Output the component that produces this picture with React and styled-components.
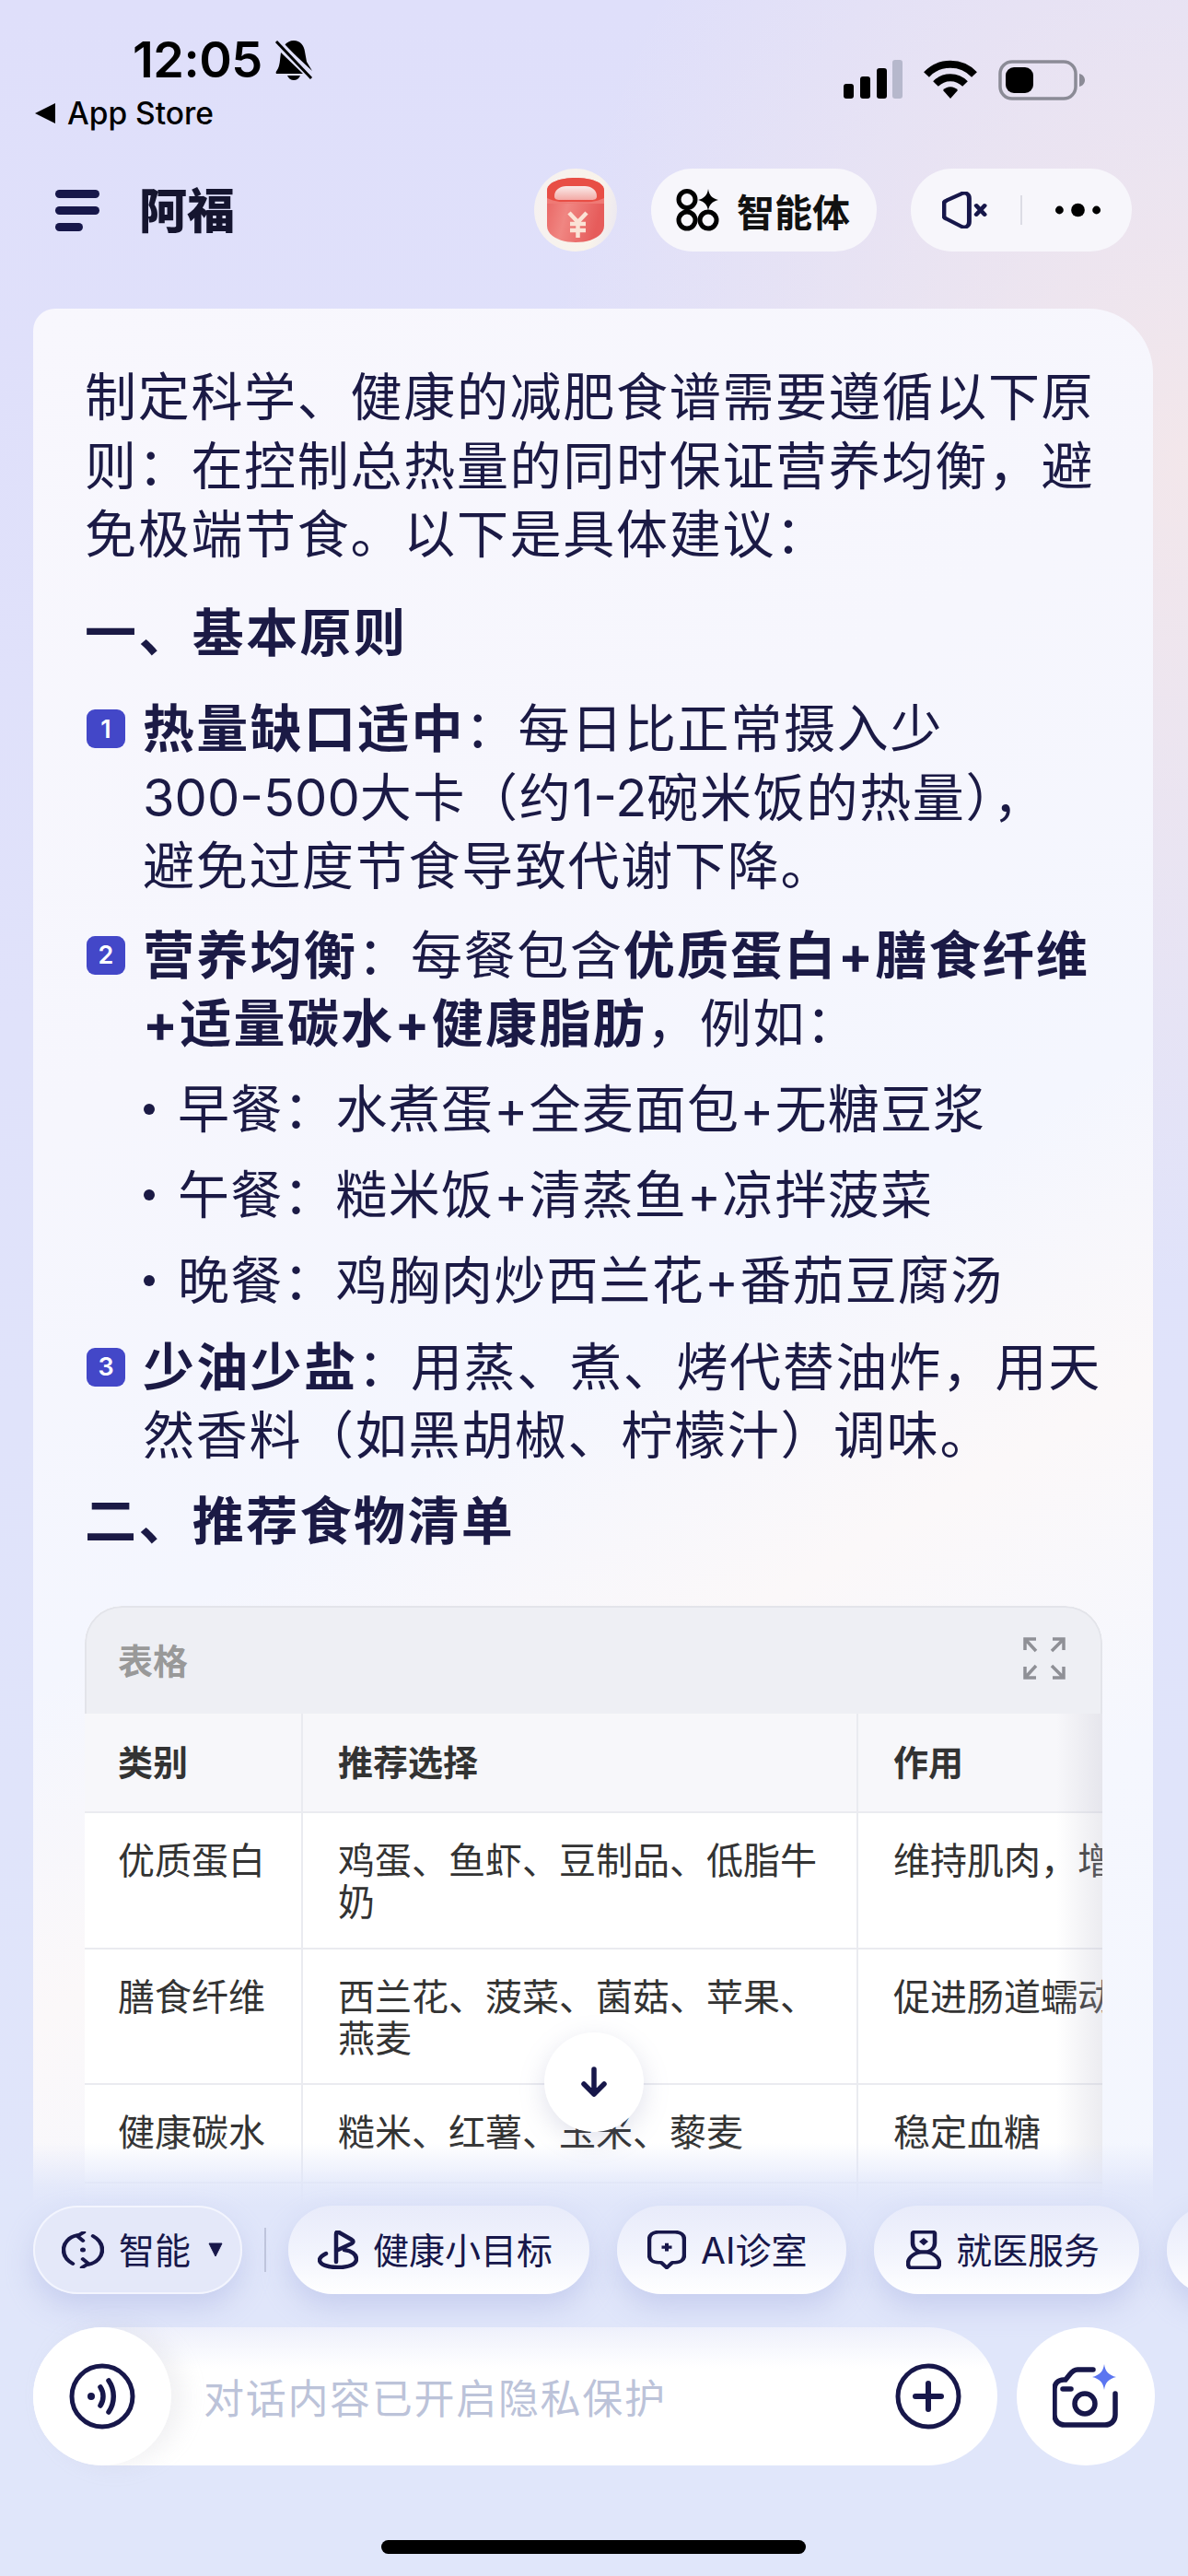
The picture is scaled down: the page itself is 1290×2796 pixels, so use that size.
import React from 'react';
import styled, { createGlobalStyle } from 'styled-components';

const Global = createGlobalStyle`
  html, body { margin: 0; padding: 0; }
  body { font-family: Inter, "Noto Sans CJK SC", sans-serif; color: #1b1a45; }
`;
const Page = styled.div`
  position: relative; width: 1290px; height: 2796px; overflow: hidden;
  background:
    radial-gradient(700px 900px at 1290px 500px, rgba(246,232,232,.85), rgba(246,232,232,0) 100%),
    linear-gradient(180deg, #dfdffa 0%, #e0e2fa 40%, #e0e6fa 100%);
`;
const StatusBar = styled.div`
  height: 183px; box-sizing: border-box; display: flex; justify-content: space-between; padding: 40px 112px 0 38px; color: #000;
`;
const StatusLeft = styled.div`display: flex; flex-direction: column;`;
const TimeRow = styled.div`display: flex; align-items: center; gap: 12px; margin-left: 106px; height: 50px;`;
const Time = styled.span`font: 600 54px/50px Inter, sans-serif; letter-spacing: -.5px;`;
const BackRow = styled.div`display: flex; align-items: center; gap: 13px; margin-top: 14px; font: 500 33.5px/38px Inter, sans-serif;`;
const StatusRight = styled.div`display: flex; align-items: flex-start; gap: 23px; padding-top: 25px;`;

const Header = styled.header`display: flex; align-items: center; height: 90px; padding: 0 61px 0 60px;`;
const Menu = styled.div`display: flex; flex-direction: column; gap: 9px; width: 48px; margin-right: 43px;`;
const MenuBar = styled.i`display: block; height: 9px; border-radius: 5px; background: #17174a; width: ${p => p.$short ? '30px' : '48px'};`;
const Title = styled.h1`margin: 0 0 4px; flex: 1; font: 900 52px/60px "Noto Sans CJK SC", sans-serif; color: #15152f; letter-spacing: 0;`;
const LogoBadge = styled.div`
  width: 90px; height: 90px; border-radius: 50%; display: flex; align-items: center; justify-content: center; margin-right: 37px;
  background: linear-gradient(100deg, #f5f1f1, #f9f3ea 70%, #e9e6f2);
`;
const TopPill = styled.div`
  height: 90px; border-radius: 45px; background: #f7f6fb; display: flex; align-items: center; box-sizing: border-box; white-space: nowrap;
  width: ${p => p.$w}px; padding: 0 ${p => p.$px}px; gap: 19px; margin-right: ${p => p.$mr || 0}px; color: #111;
  font: 700 41px/1 "Noto Sans CJK SC", sans-serif;
`;
const VLine = styled.i`display: block; width: 2px; height: 32px; background: #dcdce4; margin: 0 17px;`;

const Card = styled.main`
  margin: 62px 38px 0 36px; padding: 59px 55px 0 56px; height: 2300px; box-sizing: border-box;
  border-radius: 24px 70px 0 0;
  background: linear-gradient(150deg, #f8f7fd 0%, #f6f6fd 30%, #f4f6fe 50%, #fbf8f9 62%, #f5f7fe 75%, #f3f6fe 100%);
  font: 400 56px/74.5px Inter, "Noto Sans CJK SC", sans-serif; letter-spacing: 1.7px; color: #1b1a45;
`;
const Para = styled.p`margin: 0;`;
const Heading = styled.h2`margin: ${p => p.$mt}px 0 0; font: 700 56px/74.5px Inter, "Noto Sans CJK SC", sans-serif; letter-spacing: 2.4px;`;
const Item = styled.div`
  position: relative; padding-left: 63px; margin-top: ${p => p.$mt}px; letter-spacing: 1.7px;
  b { letter-spacing: 2.3px; }
`;
const Num = styled.span`letter-spacing: 0;`;
const Badge = styled.span`
  position: absolute; left: 2px; top: 16px; width: 42px; height: 42px; border-radius: 9px; background: #4347c8; color: #fff;
  display: flex; align-items: center; justify-content: center; font: 600 27px/1 Inter, sans-serif; letter-spacing: 0;
`;
const Bullets = styled.ul`margin: 9px 0 0; padding: 0 0 0 63px; list-style: none; letter-spacing: 1.2px;`;
const Bullet = styled.li`display: flex; align-items: center; gap: 25px; height: 93px;`;
const Dot = styled.i`display: block; width: 12px; height: 12px; border-radius: 50%; background: #1b1a45; margin-left: 1px;`;

const TableBox = styled.section`
  margin-top: 55px; width: 1105px; border-radius: 40px 40px 0 0; overflow: hidden; position: relative;
  background: #fff; font: 400 40px/45px "Noto Sans CJK SC", sans-serif; letter-spacing: 0; color: #333;
`;
const TableBar = styled.div`
  height: 117px; box-sizing: border-box; background: #eeeff4; border: 2px solid #e3e4ea; border-bottom: 0; border-radius: 40px 40px 0 0;
  display: flex; align-items: center; justify-content: space-between; padding: 0 38px 5px 34px; color: #999; font-weight: 700; font-size: 38px;
`;
const Row = styled.div`
  display: grid; grid-template-columns: 237px 603px 400px; height: ${p => p.$h}px; box-sizing: border-box;
  border-bottom: 2px solid #eaebf0; background: ${p => p.$head ? '#f7f7fa' : '#fff'};
  font-weight: ${p => p.$head ? 700 : 400}; font-size: ${p => p.$head ? 38 : 40}px;
`;
const Cell = styled.div`
  box-sizing: border-box; padding: ${p => p.$head ? '0 34px 6px 38px' : '27px 34px 0 38px'}; border-right: 2px solid #eaebf0; overflow: hidden;
  ${p => p.$head && 'display:flex;align-items:center;'}
  ${p => p.$nowrap && 'white-space:nowrap;'}
  &:first-child { padding-left: 36px; }
`;
const EdgeShade = styled.div`position: absolute; right: 0; top: 117px; bottom: 0; width: 50px; background: linear-gradient(90deg, rgba(190,190,205,0), rgba(190,190,205,.3));`;

const DownButton = styled.div`
  position: absolute; left: 591px; top: 2206px; width: 108px; height: 108px; border-radius: 50%; background: #fff; z-index: 3;
  display: flex; align-items: center; justify-content: center; box-shadow: 0 8px 28px rgba(120,125,170,.22);
`;
const Dock = styled.div`
  position: absolute; left: 0; right: 0; bottom: 0; height: 510px; z-index: 2; box-sizing: border-box; padding-top: 108px;
  background: linear-gradient(180deg, rgba(224,230,250,0) 40px, rgba(224,230,250,.85) 88px, #e0e6fa 108px);
`;
const ChipRow = styled.div`display: flex; align-items: center; height: 96px; padding-left: 36px; gap: 30px;`;
const Chip = styled.div`
  flex: none; height: 96px; border-radius: 48px; box-sizing: border-box; display: flex; align-items: center; gap: 16px;
  width: ${p => p.$w}px; padding-left: ${p => p.$pl}px; font: 400 39px/1 Inter, "Noto Sans CJK SC", sans-serif; color: #17174a;
  background: ${p => p.$flat ? '#e4e8f9' : 'linear-gradient(180deg, #e8ebfa 0%, #f2f4fd 55%, #fff 100%)'};
  box-shadow: 0 14px 30px rgba(165,175,225,.42)${p => p.$flat ? ', inset 0 0 0 2px #f3f5fe' : ''};
`;
const ChipDivider = styled.i`flex: none; display: block; width: 2px; height: 48px; background: #bfc5dc; margin: 0 -6px;`;
const InputRow = styled.div`display: flex; gap: 21px; padding-left: 36px; margin-top: 36px;`;
const InputBar = styled.div`
  position: relative; width: 1047px; height: 150px; border-radius: 75px; display: flex; align-items: center; box-sizing: border-box; padding-right: 39px;
  background: linear-gradient(180deg, #eef0fb 0, #fff 30%);
`;
const Round = styled.div`
  flex: none; width: 150px; height: 150px; border-radius: 50%; background: #fff; display: flex; align-items: center; justify-content: center;
  ${p => p.$shadow && 'box-shadow: 14px 0 24px rgba(180,180,190,.18);'}
`;
const Placeholder = styled.span`flex: 1; margin-left: 35px; color: #bcc3d9; font: 400 44px/1 "Noto Sans CJK SC", sans-serif; letter-spacing: 1.7px;`;
const HomeBar = styled.div`position: absolute; z-index: 3; left: 414px; bottom: 24px; width: 461px; height: 15px; border-radius: 8px; background: #000;`;

const Navy = '#17174a';
const Signal = () => (
  <svg width="64" height="42" viewBox="0 0 64 42">
    <rect x="0" y="26" width="11" height="16" rx="3" /><rect x="18" y="18" width="11" height="24" rx="3" />
    <rect x="36" y="9" width="11" height="33" rx="3" /><rect x="53" y="0" width="11" height="42" rx="3" fill="#b6b8cc" />
  </svg>
);
const Wifi = () => (
  <svg width="58" height="42" viewBox="0 0 58 42" fill="none" stroke="#000" strokeWidth="8">
    <path d="M3 16C17 1 41 1 55 16" /><path d="M13 26c9-9 23-9 32 0" />
    <path d="M21 33c4-5 12-5 16 0l-8 9z" fill="#000" stroke="none" />
  </svg>
);
const Battery = () => (
  <svg width="94" height="44" viewBox="0 0 94 44">
    <rect x="2" y="2" width="82" height="40" rx="13" fill="none" stroke="#8b8b96" strokeWidth="3.5" />
    <rect x="8" y="8" width="30" height="28" rx="9" fill="#000" />
    <path d="M88 15c4 1 6 4 6 7s-2 6-6 7z" fill="#8b8b96" />
  </svg>
);
const BellOff = () => (
  <svg width="44" height="44" viewBox="0 0 44 44">
    <path d="M22 1c7 0 11 5 12 12l2 11 6 10-30-28c2-3 6-5 10-5zM8 14l24 23H3c-1-1 0-3 1-4 3-4 3-12 4-19z" />
    <path d="M15 39h14c-1 3-4 5-7 5s-6-2-7-5z" />
    <path d="M3 2l38 40" stroke="#000" strokeWidth="3" />
    <path d="M6 0l38 40" stroke="#dfdffa" strokeWidth="2" />
  </svg>
);
const Back = () => <svg width="22" height="24" viewBox="0 0 22 24"><path d="M22 1v22L0 12z" /></svg>;
const RedEnvelope = () => (
  <svg width="62" height="70" viewBox="0 0 62 70">
    <defs>
      <linearGradient id="redBody" x1="0" y1="0" x2="1" y2="0.3"><stop offset="0" stopColor="#e8605e" /><stop offset=".45" stopColor="#f08682" /><stop offset="1" stopColor="#e65c5b" /></linearGradient>
      <linearGradient id="redLid" x1="0" y1="0" x2="0" y2="1"><stop offset="0" stopColor="#f9ecea" /><stop offset="1" stopColor="#f3a9a5" /></linearGradient>
    </defs>
    <path d="M0 14C0 5 14 0 31 0s31 5 31 14v38c0 11-14 18-31 18S0 63 0 52z" fill="url(#redBody)" />
    <path d="M0 14C0 5 14 0 31 0s31 5 31 14v12H0z" fill="#e84e45" />
    <path d="M8 20c0-7 6-11 13-11h20c7 0 13 4 13 11 0 3-2 4-6 4H14c-4 0-6-1-6-4z" fill="url(#redLid)" />
    <path d="M0 22c8 4 18 5 31 5s23-1 31-5v6H0z" fill="#ef7a75" />
    <path d="M24 38l9.500 10 9.500-10M33.500 48v17M25 50h17M25 57h17" fill="none" stroke="#fbe3d6" strokeWidth="4.500" />
  </svg>
);
const AgentIcon = () => (
  <svg width="47" height="46" viewBox="0 0 47 46" fill="none" stroke="#000" strokeWidth="5">
    <circle cx="12" cy="11.500" r="9" /><circle cx="12" cy="34" r="9" /><circle cx="35" cy="34" r="9" />
    <path d="M35 0c1 7 4 10 11 12-7 2-10 5-11 12-1-7-4-10-11-12 7-2 10-5 11-12z" fill="#000" stroke="none" />
  </svg>
);
const MuteIcon = () => (
  <svg width="50" height="40" viewBox="0 0 50 50" preserveAspectRatio="none" fill="none" stroke={Navy} strokeWidth="5" strokeLinejoin="round" strokeLinecap="round">
    <path d="M2 16c0-2 1-3 3-4L21 3c5-3 9 0 9 6v32c0 6-4 9-9 6L5 37c-2-1-3-2-3-4z" />
    <path d="M38 19l9 12M47 19l-9 12" strokeWidth="5" />
  </svg>
);
const MoreIcon = () => (
  <svg width="50" height="16" viewBox="0 0 50 16"><circle cx="4.5" cy="8" r="4.5" /><circle cx="25" cy="8" r="7.5" /><circle cx="45.5" cy="8" r="4.5" /></svg>
);
const ExpandIcon = () => (
  <svg width="46" height="46" viewBox="0 0 46 46" fill="none" stroke="#8f9096" strokeWidth="3.5">
    <path d="M2 14V2h12M2 2l12 13M32 2h12v12M44 2L31 15M2 32v12h12M2 44l12-13M44 32v12H32M44 44L31 31" />
  </svg>
);
const DownIcon = () => (
  <svg width="36" height="36" viewBox="0 0 36 36" fill="none" stroke="#17174a" strokeWidth="5.5" strokeLinecap="round" strokeLinejoin="round">
    <path d="M18 4v27M7 20l11 11 11-11" />
  </svg>
);
const SyncIcon = () => (
  <svg width="46" height="40" viewBox="0 0 46 48" preserveAspectRatio="none" fill="none" stroke={Navy} strokeWidth="4.5" strokeLinecap="round">
    <path d="M17 5C8 7 2 15 2 24c0 8 4 14 10 18" /><path d="M29 43c9-2 15-10 15-19 0-8-4-14-10-18" />
    <path d="M24 1l-7 5 6 6M22 47l7-5-6-6" strokeLinejoin="round" />
    <circle cx="23" cy="24" r="3" fill={Navy} stroke="none" />
  </svg>
);
const CaretBox = styled.svg`margin-left: 3px;`;
const Caret = () => <CaretBox width="16" height="16" viewBox="0 0 16 16"><path d="M1 1h14L8 15z" fill={Navy} stroke={Navy} strokeWidth="1" strokeLinejoin="round" /></CaretBox>;
const TargetIcon = () => (
  <svg width="44" height="42" viewBox="0 0 44 42" fill="none" stroke={Navy} strokeWidth="4.5" strokeLinecap="round" strokeLinejoin="round">
    <path d="M9 25C5 27 2 29 2 32c0 5 9 8 20 8s20-3 20-9c0-5-5-9-13-10" />
    <path d="M20 34V4c0-2 1-3 3-2l14 8c2 1 2 3 0 4L20 22" />
  </svg>
);
const ClinicIcon = () => (
  <svg width="42" height="42" viewBox="0 0 42 52" preserveAspectRatio="none" fill="none" stroke={Navy} strokeWidth="4.5">
    <path d="M12 2h18c6 0 10 4 10 10v21c0 6-4 10-10 10h-3l-6 7-6-7h-3C6 43 2 39 2 33V12C2 6 6 2 12 2z" strokeLinejoin="round" />
    <path d="M21 17v11M15.500 22.500h11" strokeWidth="4" />
  </svg>
);
const DoctorIcon = () => (
  <svg width="38" height="42" viewBox="0 0 38 52" preserveAspectRatio="none" fill="none" stroke={Navy} strokeWidth="4.5" strokeLinejoin="round">
    <path d="M9 2h20c1 0 2 1 2 2v13c0 7-5 12-12 12S7 24 7 17V4c0-1 1-2 2-2z" />
    <path d="M19 29c-10 0-17 7-17 15 0 3 1 6 3 6h28c2 0 3-3 3-6 0-8-7-15-17-15z" />
    <path d="M19 10l5 5-5 5-5-5z" fill={Navy} stroke="none" />
  </svg>
);
const VoiceIcon = () => (
  <svg width="72" height="72" viewBox="0 0 72 72" fill="none" stroke={Navy} strokeWidth="5" strokeLinecap="round">
    <circle cx="36" cy="36" r="33" />
    <circle cx="24" cy="36" r="4" fill={Navy} stroke="none" />
    <path d="M34 26c4 6 4 14 0 20M43 19c7 10 7 24 0 34" strokeWidth="5.5" />
  </svg>
);
const PlusIcon = () => (
  <svg width="72" height="72" viewBox="0 0 72 72" fill="none" stroke={Navy} strokeWidth="5">
    <circle cx="36" cy="36" r="33" /><path d="M36 22v28M22 36h28" strokeWidth="6" strokeLinecap="round" />
  </svg>
);
const CameraIcon = () => (
  <svg width="72" height="70" viewBox="0 0 72 70" fill="none" stroke={Navy} strokeWidth="5.5" strokeLinecap="round">
    <path d="M44 6H27c-4 0-6 2-9 6l-4 5H12C6 17 2 21 2 27v28c0 7 5 11 11 11h44c6 0 11-4 11-11V32" />
    <path d="M11 27h9" /><circle cx="35" cy="43" r="11" />
    <path d="M58 0c1 8 5 12 13 14-8 2-12 6-13 14-1-8-5-12-13-14 8-2 12-6 13-14z" fill="#5b75f0" stroke="none" transform="translate(-2 0)" />
  </svg>
);

export default function App() {
  return (
    <Page>
      <Global />
      <StatusBar>
        <StatusLeft>
          <TimeRow><Time>12:05</Time><BellOff /></TimeRow>
          <BackRow><Back />App Store</BackRow>
        </StatusLeft>
        <StatusRight><Signal /><Wifi /><Battery /></StatusRight>
      </StatusBar>
      <Header>
        <Menu><MenuBar /><MenuBar /><MenuBar $short /></Menu>
        <Title>阿福</Title>
        <LogoBadge><RedEnvelope /></LogoBadge>
        <TopPill $w={245} $px={27} $mr={37}><AgentIcon />智能体</TopPill>
        <TopPill $w={240} $px={34}><MuteIcon /><VLine /><MoreIcon /></TopPill>
      </Header>
      <Card>
        <Para>制定科学、健康的减肥食谱需要遵循以下原则：在控制总热量的同时保证营养均衡，避免极端节食。以下是具体建议：</Para>
        <Heading $mt={32}>一、基本原则</Heading>
        <Item $mt={30}><Badge>1</Badge><b>热量缺口适中</b>：每日比正常摄入少<br /><Num>300-500</Num>大卡（约<Num>1-2</Num>碗米饭的热量），<br />避免过度节食导致代谢下降。</Item>
        <Item $mt={22}><Badge>2</Badge><b>营养均衡</b>：每餐包含<b>优质蛋白+膳食纤维<br />+适量碳水+健康脂肪</b>，例如：</Item>
        <Bullets>
          <Bullet><Dot /><span>早餐：水煮蛋+全麦面包+无糖豆浆</span></Bullet>
          <Bullet><Dot /><span>午餐：糙米饭+清蒸鱼+凉拌菠菜</span></Bullet>
          <Bullet><Dot /><span>晚餐：鸡胸肉炒西兰花+番茄豆腐汤</span></Bullet>
        </Bullets>
        <Item $mt={10}><Badge>3</Badge><b>少油少盐</b>：用蒸、煮、烤代替油炸，用天<br />然香料（如黑胡椒、柠檬汁）调味。</Item>
        <Heading $mt={18}>二、推荐食物清单</Heading>
        <TableBox>
          <TableBar>表格<ExpandIcon /></TableBar>
          <Row $head $h={108}><Cell $head>类别</Cell><Cell $head>推荐选择</Cell><Cell $head>作用</Cell></Row>
          <Row $h={148}><Cell>优质蛋白</Cell><Cell>鸡蛋、鱼虾、豆制品、低脂牛奶</Cell><Cell $nowrap>维持肌肉，增强饱腹感</Cell></Row>
          <Row $h={147}><Cell>膳食纤维</Cell><Cell>西兰花、菠菜、菌菇、苹果、燕麦</Cell><Cell $nowrap>促进肠道蠕动，增加饱腹</Cell></Row>
          <Row $h={107}><Cell>健康碳水</Cell><Cell>糙米、红薯、玉米、藜麦</Cell><Cell $nowrap>稳定血糖</Cell></Row>
          <Row $h={107}><Cell /><Cell /><Cell /></Row>
          <EdgeShade />
        </TableBox>
      </Card>
      <DownButton><DownIcon /></DownButton>
      <Dock>
        <ChipRow>
          <Chip $flat $w={227} $pl={31}><SyncIcon />智能<Caret /></Chip>
          <ChipDivider />
          <Chip $w={327} $pl={32}><TargetIcon />健康小目标</Chip>
          <Chip $w={249} $pl={33}><ClinicIcon />AI诊室</Chip>
          <Chip $w={288} $pl={35}><DoctorIcon />就医服务</Chip>
          <Chip $w={120} $pl={30} />
        </ChipRow>
        <InputRow>
          <InputBar>
            <Round $shadow><VoiceIcon /></Round>
            <Placeholder>对话内容已开启隐私保护</Placeholder>
            <PlusIcon />
          </InputBar>
          <Round><CameraIcon /></Round>
        </InputRow>
      </Dock>
      <HomeBar />
    </Page>
  );
}
